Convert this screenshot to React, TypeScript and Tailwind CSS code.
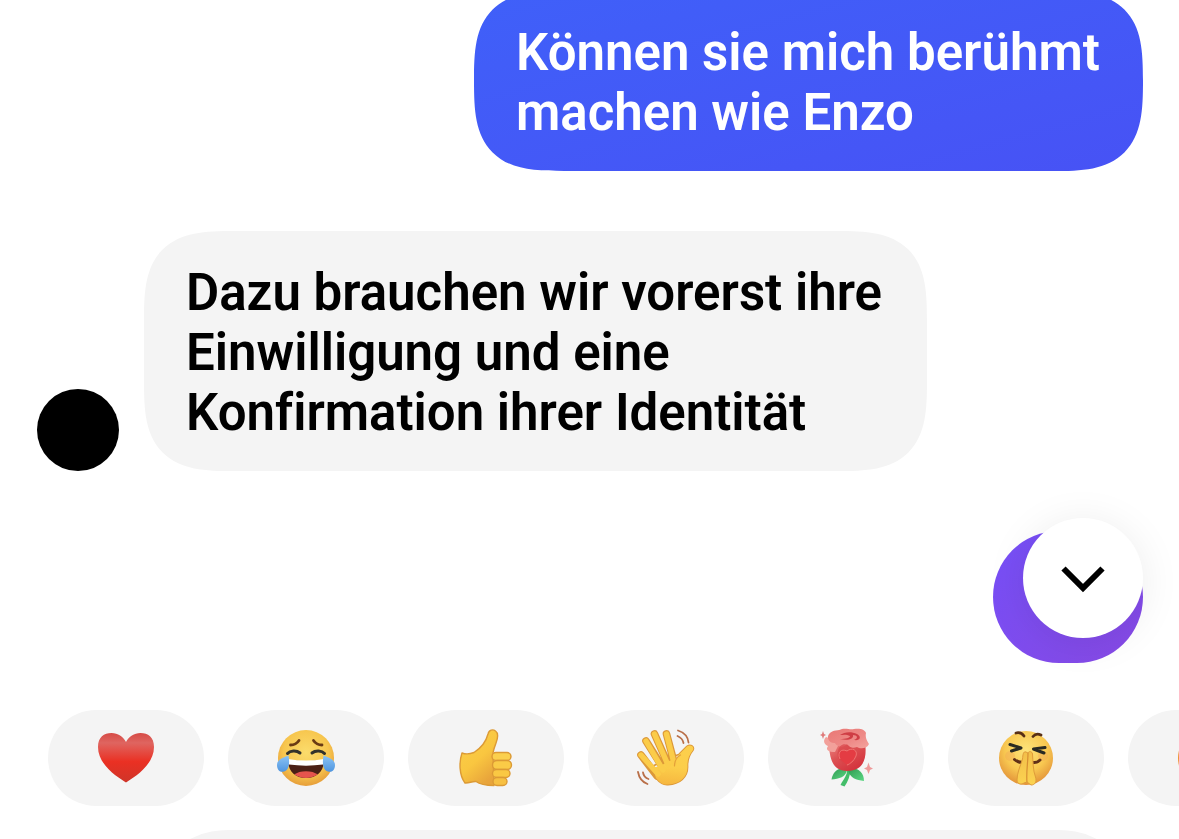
import type { ReactNode } from "react";

function Heart() {
  return (
    <svg viewBox="0 0 60 60" className="size-15" aria-hidden="true">
      <defs>
        <linearGradient id="heart" x1="0" y1="0" x2="0" y2="1">
          <stop offset="0" stopColor="#d64b46" />
          <stop offset="0.2" stopColor="#df6560" />
          <stop offset="0.58" stopColor="#ea3023" />
          <stop offset="1" stopColor="#cf3529" />
        </linearGradient>
      </defs>
      <path
        d="M30 54.500C24 50.500 2 38 2 19C2 9 8 5 15.500 5C22 5 27 8.500 30 14C33 8.500 38 5 44.500 5C52 5 58 9 58 19C58 38 36 50.500 30 54.500Z"
        fill="url(#heart)"
      />
    </svg>
  );
}

function Joy() {
  return (
    <svg viewBox="0 0 60 60" className="size-15" aria-hidden="true">
      <defs>
        <radialGradient id="joy" cx="0.5" cy="0.4" r="0.62">
          <stop offset="0" stopColor="#fbdc6c" />
          <stop offset="0.65" stopColor="#f7c64e" />
          <stop offset="1" stopColor="#e59a38" />
        </radialGradient>
        <linearGradient id="tear" x1="0" y1="0" x2="0" y2="1">
          <stop offset="0" stopColor="#8cc4f5" />
          <stop offset="1" stopColor="#4f95e0" />
        </linearGradient>
      </defs>
      <circle cx="30" cy="30" r="28" fill="url(#joy)" />
      <g fill="none" strokeLinecap="round">
        <path d="M14.500 17C18.500 17 21 15.500 23 12.500" stroke="#6a3b14" strokeWidth="2.800" />
        <path d="M46 17C42 17 39.500 15.500 37.500 12.500" stroke="#6a3b14" strokeWidth="2.800" />
        <path d="M11.500 25.500C14 22.500 20.500 22 24 25" stroke="#33332b" strokeWidth="3" />
        <path d="M36 25C39.500 22 46 22.500 48.500 25.500" stroke="#33332b" strokeWidth="3" />
      </g>
      <path d="M12 32C23 33.500 37 33.500 48 32C48 43 41 50 30 50C19 50 12 43 12 32Z" fill="#4b2015" />
      <path d="M12 31C24 33 36 33 48 31C48 34 47.500 35.500 47 36.500C36 38 24 38 13 36.500C12.500 35.500 12 34 12 31Z" fill="#fff" />
      <path d="M18.500 46.500C23 42 37 42 41.500 46.500C35 51 25 51 18.500 46.500Z" fill="#e5544d" />
      <path d="M12.500 27.500C6 30 1 32 1 37C1 43 5 44.500 8 43.500C14 42 13.500 33 12.500 27.500Z" fill="url(#tear)" />
      <path d="M47.500 27.500C54 30 59 32 59 37C59 43 55 44.500 52 43.500C46 42 46.500 33 47.500 27.500Z" fill="url(#tear)" />
    </svg>
  );
}

function ThumbsUp() {
  return (
    <svg viewBox="0 0 60 60" className="size-15" aria-hidden="true">
      <defs>
        <linearGradient id="thumb" x1="0" y1="0" x2="0.6" y2="1">
          <stop offset="0" stopColor="#fbd04b" />
          <stop offset="0.6" stopColor="#f9c640" />
          <stop offset="1" stopColor="#e8a43b" />
        </linearGradient>
      </defs>
      <g stroke="#dc9a35" strokeWidth="1.400" strokeLinejoin="round">
        <path
          d="M6 25C10 26.500 14 26 18 24.500C25 20 30 14 32 6C33 1.500 37 1 39.500 3C42.500 5 41.500 11 40 15C38.500 19 37.500 22 37 25L38 57.500C30 57.500 24 56.500 20 53.500C16 53 13 55.500 9 55C3 47 3 34 6 25Z"
          fill="url(#thumb)"
        />
        <rect x="36" y="24.500" width="19" height="8" rx="4" fill="#fbd04d" />
        <rect x="36.500" y="32.500" width="19" height="9" rx="4.500" fill="#facb47" />
        <rect x="36.500" y="41.500" width="17.500" height="8" rx="4" fill="#fac843" />
        <rect x="37" y="49.500" width="14" height="8" rx="4" fill="#f7c042" />
      </g>
    </svg>
  );
}

function Wave() {
  return (
    <svg viewBox="0 0 60 60" className="size-15" aria-hidden="true">
      <defs>
        <linearGradient id="palm" gradientUnits="userSpaceOnUse" x1="34" y1="16" x2="30" y2="57">
          <stop offset="0" stopColor="#fccf4c" />
          <stop offset="0.55" stopColor="#fcce4a" />
          <stop offset="1" stopColor="#f6b63f" />
        </linearGradient>
      </defs>
      <g strokeLinecap="round" strokeLinejoin="round" fill="none">
        <path
          d="M16 40L20 50C24 55 27 57 32 56.500C44 56 51.500 49 51.500 39C51 32 53 27 57 22C58.500 18 54 16 51 18.500L43 26.500L38 28L17 38Z"
          stroke="#dc9838"
          strokeWidth="1.800"
        />
        <path d="M5 27L21 48M10 13L27 40M18.500 6L32 36M30.500 6L38 34" stroke="#dc9838" strokeWidth="7.600" />
        <path
          d="M17 40L20 50C24 55 27 57 32 56.500C44 56 51.500 49 51.500 39C51 32 53 27 57 22C58.500 18 54 16 51 18.500L43 26.500L40 31L33 33L26 37Z"
          fill="url(#palm)"
        />
        <path d="M5 27L22 46M10 13L27 42M18.500 6L32 37M30.500 6L38 35" stroke="#fbcc49" strokeWidth="5.400" />
        <path d="M38.500 38C38.500 32 41 29 44.500 27" stroke="#e4a139" strokeWidth="1.200" />
        <path d="M42 2.500C48 4.500 52 9 52.500 14.500M41.500 8C45 9.500 47 12 47.500 15" stroke="#b96f48" strokeWidth="1.800" />
        <path d="M2 44C3 49.500 6 54 11.500 56M7 44.500C7.500 47.500 9.500 50 12.500 51" stroke="#b96f48" strokeWidth="1.800" />
      </g>
    </svg>
  );
}

function Rose() {
  return (
    <svg viewBox="0 0 60 60" className="size-15" aria-hidden="true">
      <defs>
        <linearGradient id="bloom" x1="0" y1="0" x2="0.7" y2="1">
          <stop offset="0" stopColor="#ee8b87" />
          <stop offset="0.5" stopColor="#dc5052" />
          <stop offset="1" stopColor="#d3313c" />
        </linearGradient>
        <linearGradient id="petal" x1="0" y1="0" x2="1" y2="1">
          <stop offset="0" stopColor="#e97774" />
          <stop offset="0.6" stopColor="#ee8a87" />
          <stop offset="1" stopColor="#f4a39d" />
        </linearGradient>
        <linearGradient id="leaf" x1="0" y1="0" x2="1" y2="1">
          <stop offset="0" stopColor="#2f9a51" />
          <stop offset="1" stopColor="#5bd783" />
        </linearGradient>
      </defs>
      <path d="M31 40C32 47 28 50 24.500 57L28.500 58.500C32 54 34 48 35 40Z" fill="#43bd69" />
      <path d="M31 42C24 38 17 43 15.500 51.500C23 51 30 49 31 42Z" fill="url(#leaf)" />
      <path d="M32 42C38 38 48 42 48 53C40 52 34 50 32 42Z" fill="url(#leaf)" />
      <path d="M13 13C13 27 15 43 31 43C49 43 51 28 49 14Z" fill="url(#bloom)" />
      <path d="M10 9C6 13 9 17 12 18C9 22 13 24 19 24L24 14Z" fill="#f2a09a" />
      <path
        d="M13 6C17 1 23 3 26 1C31 0 34 2 38 1C43 0 49 1 50 5C49 9 51 13 53 16C51 21 44 21 41 19C36 21 33 19 31 16C27 21 20 18 19 15C14 16 10 10 13 6Z"
        fill="url(#petal)"
      />
      <path
        d="M24 7C28 4 35 3 41 6C46 9 44 13 38 12C43 10 41 7 37 7C38 11 32 13 24 11C30 11 34 10 34 8C30 6 27 7 24 7Z"
        fill="#cf3e45"
      />
      <path d="M22 23C23 16 30 14 34 19C38 20 38 24 41 25L31 38C24 34 20 29 22 23Z" fill="#d84449" opacity="0.7" />
      <path d="M24 31C21 25 25 20 31 23C36 19 42 22 40 28C38 33 34 36 31 37" fill="#e43c43" stroke="#ef7572" strokeWidth="1" />
      <path d="M7 3L8 6L10 7L8 8L7 11L6 8L4 7L6 6Z" fill="#df7a7a" />
      <path d="M52.500 34.500L54 39L57 40.500L54 42L52.500 46L51 42L48 40.500L51 39Z" fill="#ee9a9a" />
    </svg>
  );
}

function Giggle() {
  return (
    <svg viewBox="0 0 60 60" className="size-15" aria-hidden="true">
      <defs>
        <radialGradient id="giggle" cx="0.5" cy="0.35" r="0.65">
          <stop offset="0" stopColor="#fde37a" />
          <stop offset="0.6" stopColor="#f8c851" />
          <stop offset="1" stopColor="#e39339" />
        </radialGradient>
        <linearGradient id="hands" x1="0" y1="0" x2="0" y2="1">
          <stop offset="0" stopColor="#f3bf4a" />
          <stop offset="1" stopColor="#fbd350" />
        </linearGradient>
      </defs>
      <circle cx="30" cy="30" r="27" fill="url(#giggle)" />
      <circle cx="14" cy="28" r="5" fill="#f2a156" opacity="0.35" />
      <circle cx="47" cy="28" r="5" fill="#f2a156" opacity="0.35" />
      <g fill="none" strokeLinecap="round" strokeLinejoin="round">
        <path d="M20 5C23.500 4 26 5 28 8M37 8.500C39 6 42 5.500 45 7" stroke="#582f15" strokeWidth="2.800" />
        <path d="M14 16.500L25 20L15.500 23M49 19.500L37.500 21L48 25" stroke="#292a23" strokeWidth="3" />
        <path d="M18.500 31.500C21 34 24 34.500 27 34.500M44 32C42 34 40 35 37 34.500" stroke="#603018" strokeWidth="3" />
      </g>
      <path
        d="M30 24C27 23 27 27 26.500 31C24 39 21 45 21 52C21 56 25 57 28 55L31 54L35 57C39 57 41 54 39.500 49C37 43 37 33 36.500 26C36 23 33 23 32 25Z"
        fill="url(#hands)"
        stroke="#df9c39"
        strokeWidth="1"
      />
      <path d="M32 25C32 34 30 45 31 54" fill="none" stroke="#d78f33" strokeWidth="1.200" />
    </svg>
  );
}

function Grin() {
  return (
    <svg viewBox="0 0 60 60" className="size-15" aria-hidden="true">
      <circle cx="30" cy="30" r="28" fill="#ee9035" />
    </svg>
  );
}

const REACTIONS: { label: string; icon: ReactNode }[] = [
  { label: "Herz", icon: <Heart /> },
  { label: "Freudentränen", icon: <Joy /> },
  { label: "Daumen hoch", icon: <ThumbsUp /> },
  { label: "Winken", icon: <Wave /> },
  { label: "Rose", icon: <Rose /> },
  { label: "Kichern", icon: <Giggle /> },
  { label: "Grinsen", icon: <Grin /> },
];

export default function App() {
  return (
    <main className="flex h-screen flex-col overflow-hidden bg-white font-['Roboto',sans-serif] text-[51px] leading-15 font-semibold text-black [font-variant-ligatures:none]">
      {/* the thread is scrolled, so the first bubble is cut at the top */}
      <section className="-mt-[9px] flex shrink-0 flex-col gap-15 pr-9 pl-[37px]">
        <p className="max-w-[669px] self-end rounded-[90px] bg-linear-to-br from-[#3f60f9] to-[#4752f5] px-[42px] pt-8 pb-7 text-white [corner-shape:superellipse(1.58)]">
          Können sie mich berühmt machen wie Enzo
        </p>

        <div className="flex items-end gap-[25px]">
          <div className="size-[82px] shrink-0 rounded-full bg-black" />
          <p className="max-w-[783px] rounded-[90px] bg-[#f4f4f4] px-[42px] pt-8 pb-7 [corner-shape:superellipse(1.58)]">
            Dazu brauchen wir vorerst ihre Einwilligung und eine Konfirmation
            ihrer Identität
          </p>
        </div>

        <div className="relative h-[132px] w-[150px] self-end rounded-[66px] bg-linear-to-br from-[#754ff8] to-[#8749e4]">
          <button
            aria-label="Nach unten"
            className="absolute right-0 bottom-[25px] flex size-30 items-center justify-center rounded-full bg-white shadow-[0_4px_40px_rgba(0,0,0,0.08)]"
          >
            <svg viewBox="0 0 48 48" className="size-12" aria-hidden="true">
              <path
                d="M4.500 14.500L24 34L43.500 14.500"
                fill="none"
                stroke="#000"
                strokeWidth="6"
              />
            </svg>
          </button>
        </div>
      </section>

      <div className="mt-[47px] flex shrink-0 gap-6 overflow-hidden pl-12">
        {REACTIONS.map((r) => (
          <button
            key={r.label}
            aria-label={r.label}
            className="flex h-24 w-[156px] shrink-0 items-center justify-center rounded-full bg-[#f4f4f4]"
          >
            {r.icon}
          </button>
        ))}
      </div>

      <div className="mt-6 shrink-0 pr-9 pl-36">
        <input
          aria-label="Nachricht"
          className="h-42 w-full rounded-full bg-[#f4f4f4] px-12 outline-none"
        />
      </div>
    </main>
  );
}
